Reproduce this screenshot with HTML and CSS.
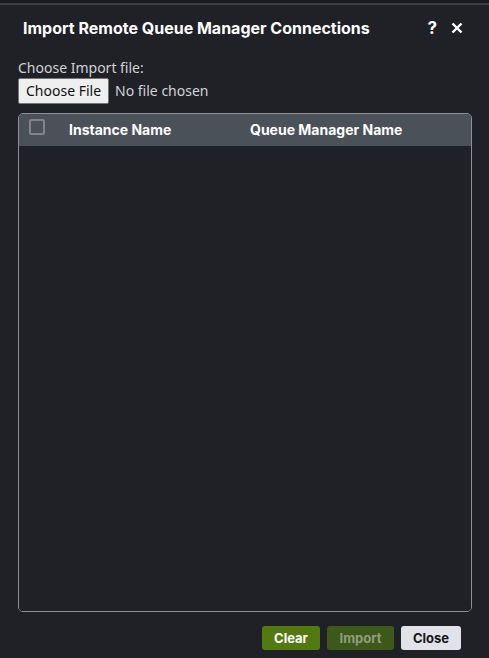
FILE: index.html
```html
<!DOCTYPE html>
<html>
<head>
<meta charset="utf-8">
<link rel="stylesheet" href="styles.css">
</head>
<body>
<div class="topbar"></div>
<div class="dialog">
  <div class="header">
    <h1 class="title">Import Remote Queue Manager Connections</h1>
    <div class="header-actions">
      <span class="help">?</span>
      <svg class="close-x" width="12" height="12" viewBox="0 0 12 12"><path d="M1.5 1.5 L10.5 10.5 M10.5 1.5 L1.5 10.5" stroke="#fff" stroke-width="2.4" stroke-linecap="butt"/></svg>
    </div>
  </div>
  <div class="body">
    <label class="file-label">Choose Import file:</label>
    <div class="file-row">
      <span class="file-btn">Choose File</span>
      <span class="file-name">No file chosen</span>
    </div>
    <div class="table">
      <div class="thead">
        <span class="check"></span>
        <span class="col col-instance">Instance Name</span>
        <span class="col col-qm">Queue Manager Name</span>
      </div>
      <div class="tbody"></div>
    </div>
  </div>
  <div class="footer">
    <button class="btn btn-clear">Clear</button>
    <button class="btn btn-import">Import</button>
    <button class="btn btn-close">Close</button>
  </div>
</div>
</body>
</html>
```
FILE: styles.css
```css
html, body {
  margin: 0;
  padding: 0;
  background: #202126;
  width: 489px;
  height: 658px;
  overflow: hidden;
}
.topbar {
  height: 3px;
  background: #18191c;
  border-bottom: 2px solid #3c3d42;
}
.dialog {
  display: flex;
  flex-direction: column;
  height: 653px;
  font-family: "Noto Sans", sans-serif;
  color: #d6d8dc;
}
.header {
  display: flex;
  align-items: center;
  justify-content: space-between;
  padding: 9px 26px 0 23px;
  height: 28px;
}
.title {
  margin: 0;
  font-family: Inter, sans-serif;
  font-weight: 700;
  font-size: 16px;
  color: #ffffff;
  letter-spacing: 0;
}
.header-actions {
  display: flex;
  align-items: center;
  gap: 14px;
}
.help {
  font-family: Inter, sans-serif;
  font-weight: 700;
  font-size: 17px;
  color: #ffffff;
}
.close-x { display: block; }
.body {
  padding: 17px 18px 0 18px;
  flex: 1;
  display: flex;
  flex-direction: column;
}
.file-label {
  font-size: 14px;
  line-height: 17px;
  color: #d0d2d6;
}
.file-row {
  display: flex;
  align-items: center;
  margin-top: 2px;
  gap: 6px;
}
.file-btn {
  display: inline-block;
  box-sizing: border-box;
  height: 26px;
  padding: 0 7px;
  line-height: 24px;
  background: #efefef;
  border: 1px solid #767676;
  border-radius: 2px;
  color: #111;
  font-size: 14px;
}
.file-name {
  font-size: 14px;
  color: #d0d2d6;
}
.table {
  margin-top: 9px;
  width: 454px;
  height: 499px;
  box-sizing: border-box;
  border: 1px solid #8d8f94;
  border-radius: 5px;
  overflow: hidden;
  display: flex;
  flex-direction: column;
}
.thead {
  height: 32px;
  background: #4b5159;
  display: flex;
  align-items: center;
  position: relative;
}
.check {
  box-sizing: border-box;
  width: 16px;
  height: 16px;
  border: 2px solid #80858d;
  border-radius: 2px;
  margin-left: 10px;
  align-self: flex-start;
  margin-top: 5px;
}
.col {
  font-family: Inter, sans-serif;
  font-weight: 700;
  font-size: 14px;
  color: #ffffff;
}
.col-instance {
  margin-left: 24px;
  width: 181px;
}
.tbody {
  flex: 1;
  background: #202126;
}
.footer {
  display: flex;
  justify-content: flex-end;
  gap: 7px;
  padding: 14px 28px 0 0;
  height: 47px;
  align-items: flex-start;
  box-sizing: border-box;
}
.btn {
  height: 24px;
  border: none;
  border-radius: 3px;
  font-family: Inter, sans-serif;
  font-weight: 700;
  font-size: 13px;
  padding: 0;
  cursor: pointer;
}
.btn-clear {
  width: 58px;
  background: #537a10;
  color: #ffffff;
}
.btn-import {
  width: 67px;
  background: #3d5919;
  color: #8f9c80;
}
.btn-close {
  width: 60px;
  background: #e1e3e8;
  color: #16171a;
}
```
